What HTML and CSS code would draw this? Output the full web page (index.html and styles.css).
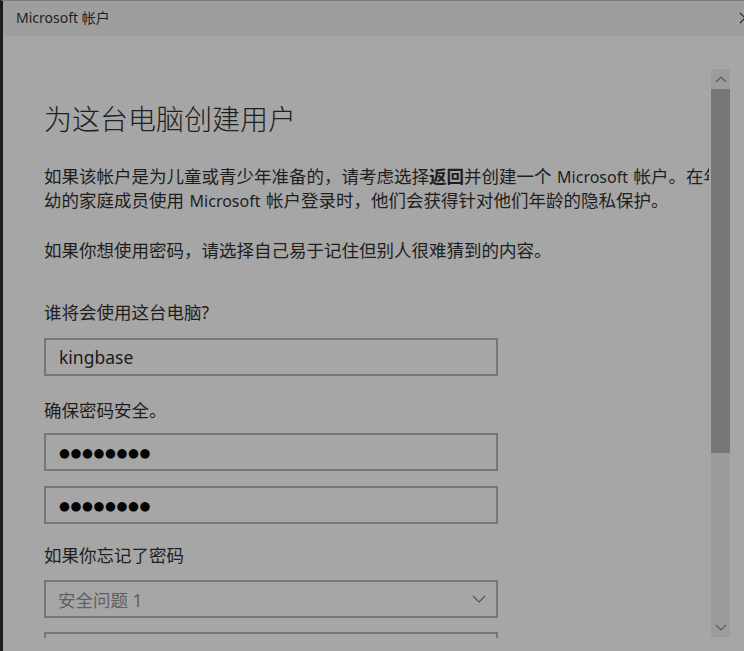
FILE: index.html
```html
<!DOCTYPE html>
<html lang="zh-CN">
<head>
<meta charset="utf-8">
<title>Microsoft 帐户</title>
<link rel="stylesheet" href="styles.css">
</head>
<body>
<div class="window">
  <div class="titlebar">
    <span class="title">Microsoft 帐户</span>
    <svg class="close" width="12" height="12" viewBox="0 0 12 12"><path d="M1 1 L11 11 M11 1 L1 11" stroke="#2a2a2a" stroke-width="1.2" fill="none"/></svg>
  </div>
  <div class="main">
    <div class="viewport">
      <div class="content">
        <h1 class="heading">为这台电脑创建用户</h1>
        <p class="intro">如果该帐户是为儿童或青少年准备的，请考虑选择<b>返回</b>并创建一个 <span class="latin">Microsoft</span> 帐户。在年<br>幼的家庭成员使用 <span class="latin">Microsoft</span> 帐户登录时，他们会获得针对他们年龄的隐私保护。</p>
        <p class="hint">如果你想使用密码，请选择自己易于记住但别人很难猜到的内容。</p>
        <div class="label label-user">谁将会使用这台电脑?</div>
        <div class="field field-user"><span class="value">kingbase</span></div>
        <div class="label label-pass">确保密码安全。</div>
        <div class="field field-pass"><span class="dots">●●●●●●●●</span></div>
        <div class="field field-pass2"><span class="dots">●●●●●●●●</span></div>
        <div class="label label-forgot">如果你忘记了密码</div>
        <div class="field select"><span class="placeholder">安全问题 1</span>
          <svg class="chev" width="14" height="8" viewBox="0 0 14 8"><path d="M1 1 L7 7 L13 1" stroke="#555" stroke-width="1.2" fill="none"/></svg>
        </div>
        <div class="field field-next"></div>
      </div>
    </div>
    <div class="scrollbar">
      <div class="sb-btn"><svg width="12" height="7" viewBox="0 0 12 7"><path d="M1 6 L6 1 L11 6" stroke="#5a5a5a" stroke-width="1.2" fill="none"/></svg></div>
      <div class="sb-thumb"></div>
      <div class="sb-track"></div>
      <div class="sb-btn"><svg width="12" height="7" viewBox="0 0 12 7"><path d="M1 1 L6 6 L11 1" stroke="#5a5a5a" stroke-width="1.2" fill="none"/></svg></div>
    </div>
  </div>
</div>
</body>
</html>
```

FILE: styles.css
```css
html, body {
  margin: 0;
  padding: 0;
}
body {
  width: 744px;
  height: 651px;
  overflow: hidden;
  background: #a6a6a6;
  font-family: "Noto Sans", "Noto Sans CJK SC", sans-serif;
  color: #1e1e1e;
}
.window {
  width: 741px;
  height: 650px;
  border-left: 3px solid #1c1c1c;
  border-top: 1px solid #7b7b7b;
  display: flex;
  flex-direction: column;
  overflow: hidden;
}
.titlebar {
  height: 35px;
  flex: none;
  background: #9e9e9e;
  display: flex;
  align-items: center;
  justify-content: space-between;
  padding-left: 13px;
}
.title {
  font-size: 14px;
  color: #1e1e1e;
  margin-top: -3px;
}
.close {
  margin-right: -7px;
  margin-top: -2px;
}
.main {
  display: flex;
  height: 602px;
  flex: none;
}
.viewport {
  width: 706px;
  height: 602px;
  overflow: hidden;
  flex: none;
}
.content {
  padding-left: 41px;
  display: flex;
  flex-direction: column;
  align-items: flex-start;
}
.heading {
  margin: 63px 0 0 0;
  font-size: 28px;
  line-height: 40px;
  font-weight: 300;
  color: #202020;
  white-space: nowrap;
}
.intro {
  margin: 25px 0 0 0;
  font-size: 17.5px;
  line-height: 24px;
  height: 48px;
  white-space: nowrap;
}
.intro b {
  font-weight: 700;
}
.latin {
  font-size: 16px;
  line-height: 1;
  margin: 0 1px;
}
.hint {
  margin: 26px 0 0 0;
  font-size: 17.5px;
  line-height: 24px;
  white-space: nowrap;
}
.label {
  font-size: 17.5px;
  line-height: 24px;
  height: 24px;
  white-space: nowrap;
}
.label-user { margin-top: 38px; }
.label-pass { margin-top: 22px; }
.label-forgot { margin-top: 19px; }
.field {
  box-sizing: border-box;
  width: 454px;
  height: 38px;
  border: 2px solid #777777;
  display: flex;
  align-items: center;
  padding-left: 13px;
  padding-right: 10px;
}
.field-user { margin-top: 14px; }
.field-pass { margin-top: 11px; }
.field-pass2 { margin-top: 15px; }
.select { margin-top: 13px; justify-content: space-between; padding-left: 12px; }
.field-next { margin-top: 14px; }
.value {
  font-size: 17.5px;
  color: #1a1a1a;
}
.dots {
  font-family: "DejaVu Sans", sans-serif;
  font-size: 12.5px;
  letter-spacing: 0.6px;
  color: #050505;
}
.placeholder {
  font-size: 17.5px;
  color: #5f5f5f;
}
.scrollbar {
  width: 19px;
  margin-left: 2px;
  margin-top: 33px;
  height: 568px;
  background: #9c9c9c;
  display: flex;
  flex-direction: column;
  flex: none;
}
.sb-btn {
  height: 20px;
  flex: none;
  display: flex;
  align-items: center;
  justify-content: center;
}
.sb-thumb {
  height: 364px;
  background: #787878;
  flex: none;
}
.sb-track {
  flex: 1;
}
```
